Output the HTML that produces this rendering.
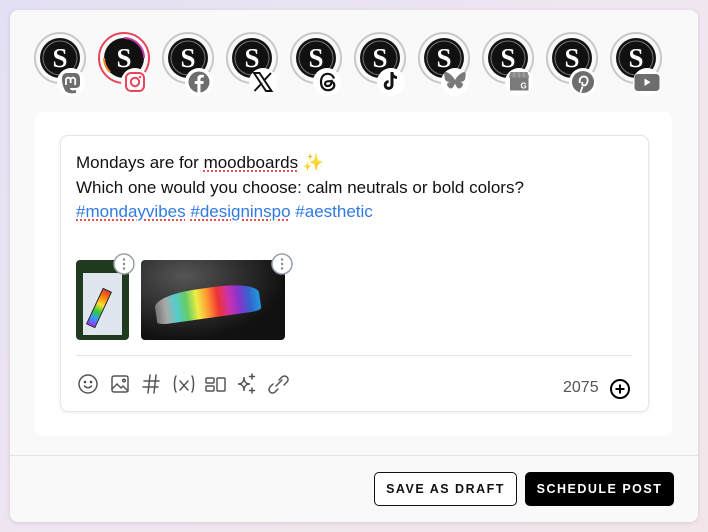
<!DOCTYPE html>
<html><head><meta charset="utf-8"><style>
*{box-sizing:border-box;margin:0;padding:0}
body{width:708px;height:532px;overflow:hidden;background:linear-gradient(135deg,#e4e0f4,#efe6f0 50%,#f3e6ea);font-family:"Liberation Sans",Arial,sans-serif;position:relative}
.card{position:absolute;left:10px;top:10px;width:688px;height:512px;background:#f9f9f9;border-radius:8px;box-shadow:0 1px 4px rgba(0,0,0,.12)}
.av{position:absolute;top:31px;width:70px;height:70px;overflow:visible}
.panel{position:absolute;left:35px;top:112px;width:637px;height:324px;background:#fff;border-radius:8px}
.editor{position:absolute;left:60px;top:135px;width:589px;height:277px;border:1px solid #e6e6e6;border-radius:8px;background:#fff;box-shadow:0 1px 3px rgba(0,0,0,.08)}
.txt{position:absolute;left:76px;top:151px;font-size:17px;line-height:24.5px;color:#111}
.sp{text-decoration:underline dotted #e03b3b;text-underline-offset:3px}
.tag{color:#2f7ae5}
.sep{position:absolute;left:76px;top:355px;width:556px;height:1px;background:#e6e6e6}
.foot{position:absolute;left:10px;top:455px;width:688px;height:1px;background:#e2e2e2}
.btn{position:absolute;top:472px;height:34px;border-radius:5px;font-size:12.5px;letter-spacing:1.5px;font-weight:bold;display:flex;align-items:center;justify-content:center}
</style></head><body>
<div class="card"></div>
<svg width="0" height="0" style="position:absolute"><defs>
<g id="s"><circle cx="27" cy="27" r="25" fill="none" stroke="#c8c8c8" stroke-width="2"/><circle cx="27" cy="27" r="20" fill="#111"/><circle cx="27" cy="27" r="17" fill="none" stroke="#777" stroke-width="1"/><text x="27" y="36" text-anchor="middle" font-family="Liberation Serif,serif" font-weight="bold" font-size="27" fill="#fff">S</text><circle cx="38" cy="51" r="14" fill="#fff"/></g>
</defs></svg>
<svg class="av" style="left:33px" viewBox="0 0 70 70"><use href="#s"/><g transform="translate(38,51)"><path d="M-9 -3c0-4 2-6 5-6h8c3 0 5 2 5 6v5c0 3-2 4-5 4h-5c0 2 2 3 6 2v3c-6 1-11 0-12-5-1-2-2-5-2-9z" fill="#6d6d6d"/><path d="M-5 3v-5a2.3 2.3 0 0 1 4.6 0v3M-.4 1v-3a2.3 2.3 0 0 1 4.6 0v5" stroke="#fff" stroke-width="1.8" fill="none"/></g></svg>
<svg class="av" style="left:97px" viewBox="0 0 70 70"><circle cx="27" cy="27" r="25" fill="none" stroke="#e8445a" stroke-width="2"/><circle cx="27" cy="27" r="20" fill="#111"/><path d="M27 7a20 20 0 0 1 20 20" stroke="#c2389e" stroke-width="2" fill="none"/><path d="M7 27a20 20 0 0 0 6 14" stroke="#f08a1c" stroke-width="2" fill="none"/><text x="27" y="36" text-anchor="middle" font-family="Liberation Serif,serif" font-weight="bold" font-size="27" fill="#fff">S</text><circle cx="38" cy="51" r="14" fill="#fff"/><rect x="29" y="42" width="18" height="18" rx="5" fill="none" stroke="#e8445a" stroke-width="2"/><circle cx="38" cy="51" r="4.2" fill="none" stroke="#e8445a" stroke-width="2"/><circle cx="43" cy="46" r="1.2" fill="#e8445a"/></svg>
<svg class="av" style="left:161px" viewBox="0 0 70 70"><use href="#s"/><circle cx="38" cy="51" r="10.5" fill="#6d6d6d"/><path d="M39.5 61.5v-8.5h2.8l.4-3h-3.2v-2c0-.9.3-1.5 1.6-1.5h1.7v-2.7a20 20 0 0 0-2.4-.1c-2.4 0-4 1.4-4 4V50h-2.6v3h2.6v8.5z" fill="#fff"/></svg>
<svg class="av" style="left:225px" viewBox="0 0 70 70"><use href="#s"/><path d="M29 42h5.5l12 18h-5.5z" fill="none" stroke="#111" stroke-width="2"/><path d="M29.5 60l7.5-8M39 49.5l7-7.5" stroke="#111" stroke-width="2"/></svg>
<svg class="av" style="left:289px" viewBox="0 0 70 70"><use href="#s"/><path d="M45 47.5c-1-3-3.6-4.8-6.5-4.7-4 .1-6.5 3.2-6.5 8.2s2.6 8.2 7 8.2c3.6 0 6.3-2.2 6.3-5 0-2.6-2.4-4-5.4-4-2.4 0-3.9 1.1-3.9 2.6 0 1.4 1.3 2.2 2.8 2.2 2.8 0 4.1-2.2 3.9-6.2" stroke="#111" stroke-width="2.2" fill="none"/></svg>
<svg class="av" style="left:353px" viewBox="0 0 70 70"><use href="#s"/><path d="M39 41v13a3.4 3.4 0 1 1-3.4-3.4" stroke="#111" stroke-width="3" fill="none"/><path d="M39 42c.5 2.8 2.2 4.4 5 4.6" stroke="#111" stroke-width="2.8" fill="none"/></svg>
<svg class="av" style="left:417px" viewBox="0 0 70 70"><use href="#s"/><path d="M38 49c-2.4-4.6-7-8-9.5-8-1.8 0-1.2 4.6-.6 7 .8 2.3 3 3.1 5.3 2.9-3.5.7-4.1 2.9-1.8 5.2 3.5 3.5 5.3-.6 6.6-3.5 1.3 2.9 3.1 7 6.6 3.5 2.3-2.3 1.7-4.5-1.8-5.2 2.3.2 4.5-.6 5.3-2.9.6-2.4 1.2-7-.6-7-2.5 0-7.1 3.4-9.5 8z" fill="#7a7a7a"/></svg>
<svg class="av" style="left:481px" viewBox="0 0 70 70"><use href="#s"/><path d="M29.5 41h17l1.8 5.5h-20.6z" fill="#8a8a8a"/><path d="M33 41v5.5M38 41v5.5M43 41v5.5" stroke="#aaa" stroke-width="1"/><rect x="29" y="46.5" width="18.5" height="13" fill="#7a7a7a"/><text x="39.5" y="57.5" font-size="8" font-weight="bold" fill="#fff" font-family="Liberation Sans,sans-serif">G</text></svg>
<svg class="av" style="left:545px" viewBox="0 0 70 70"><use href="#s"/><circle cx="38" cy="51" r="11" fill="#6d6d6d"/><path d="M37.5 55.5l-2 6M35 52c-1.2-3 .7-6.5 3.8-6.5 2.8 0 4.2 2.1 3.8 4.7-.5 2.8-2.1 4.7-4 4.2-1.5-.4-1.6-1.8-1.2-3.5" stroke="#fff" stroke-width="1.8" fill="none"/></svg>
<svg class="av" style="left:609px" viewBox="0 0 70 70"><use href="#s"/><rect x="25.5" y="43" width="25" height="17" rx="3.5" fill="#6d6d6d"/><path d="M35.5 47.5v7.5l6-3.75z" fill="#fff"/></svg>

<div class="panel"></div>
<div class="editor"></div>
<div class="txt">Mondays are for <span class="sp">moodboards</span> <span style="color:#f2c53d">✨</span><br>Which one would you choose: calm neutrals or bold colors?<br><span class="tag"><span class="sp">#mondayvibes</span> <span class="sp">#designinspo</span> #aesthetic</span></div>

<div style="position:absolute;left:76px;top:260px;width:53px;height:80px;border-radius:4px;background:#1f3a1f;overflow:hidden"><div style="position:absolute;left:7px;top:13px;width:39px;height:62px;background:#dfe6ee"></div><div style="position:absolute;left:18px;top:28px;width:10px;height:40px;background:linear-gradient(#e33,#f80,#fd3,#3c3,#39f,#93f);transform:rotate(25deg);border:1px solid #222"></div></div>
<div style="position:absolute;left:141px;top:260px;width:144px;height:80px;border-radius:4px;background:radial-gradient(ellipse at 30% 20%,#555,#111 70%)"><div style="position:absolute;left:14px;top:28px;width:105px;height:30px;border-radius:40% 40% 10% 10%;background:linear-gradient(90deg,#777,#aaa,#5cc,#6c6,#ee4,#f93,#e33,#c3a,#83c,#36c,#29d);transform:rotate(-8deg)"></div></div>
<svg style="position:absolute;left:112px;top:252px" width="24" height="24"><circle cx="12" cy="12" r="10" fill="#fff" stroke="#9aa0aa" stroke-width="1.5"/><circle cx="12" cy="7.5" r="1.2" fill="#888"/><circle cx="12" cy="12" r="1.2" fill="#888"/><circle cx="12" cy="16.5" r="1.2" fill="#888"/></svg>
<svg style="position:absolute;left:270px;top:252px" width="24" height="24"><circle cx="12" cy="12" r="10" fill="#fff" stroke="#9aa0aa" stroke-width="1.5"/><circle cx="12" cy="7.5" r="1.2" fill="#888"/><circle cx="12" cy="12" r="1.2" fill="#888"/><circle cx="12" cy="16.5" r="1.2" fill="#888"/></svg>

<div class="sep"></div>
<svg style="position:absolute;left:76px;top:372px" width="230" height="24" fill="none" stroke="#555" stroke-width="1.5" stroke-linecap="round">
<circle cx="12" cy="12" r="9"/><circle cx="9" cy="10" r=".6" fill="#555"/><circle cx="15" cy="10" r=".6" fill="#555"/><path d="M8.5 14a4.5 4.5 0 0 0 7 0"/>
<rect x="36" y="4" width="16" height="16" rx="2"/><path d="M36 17l5-5 4 4 2-2 5 5"/><circle cx="48" cy="8.5" r="1.3"/>
<path d="M74 3l-2 18M80 3l-2 18M68 9h15M67 15h15"/>
<path d="M100 4c-2 3-2 13 0 16M116 4c2 3 2 13 0 16M104 9l8 9M112 9l-8 9"/>
<rect x="130" y="6" width="8" height="5" rx="1"/><rect x="130" y="14" width="8" height="5" rx="1"/><rect x="141" y="6" width="8" height="13" rx="1"/>
<path d="M168 5c0 5 2 7 6 7-4 0-6 2-6 7 0-5-2-7-6-7 4 0 6-2 6-7zM176 2v5M173.5 4.5h5M176 16v5M173.5 18.5h5"/>
<path d="M203 10l3-3a3.5 3.5 0 0 1 5 5l-3 3M197 14l-3 3a3.5 3.5 0 0 0 5 5l3-3M200 16l6-6" transform="translate(0,-2)"/>
</svg>
<div style="position:absolute;left:563px;top:379px;font-size:16px;color:#555">2075</div>
<svg style="position:absolute;left:609px;top:378px" width="22" height="22"><circle cx="11" cy="11" r="9" fill="none" stroke="#000" stroke-width="2"/><path d="M11 6.5v9M6.5 11h9" stroke="#000" stroke-width="2"/></svg>

<div class="foot"></div>
<div class="btn" style="left:374px;width:143px;border:1px solid #111;background:#fff;color:#111">SAVE AS DRAFT</div>
<div class="btn" style="left:525px;width:149px;background:#000;color:#fff">SCHEDULE POST</div>
</body></html>
